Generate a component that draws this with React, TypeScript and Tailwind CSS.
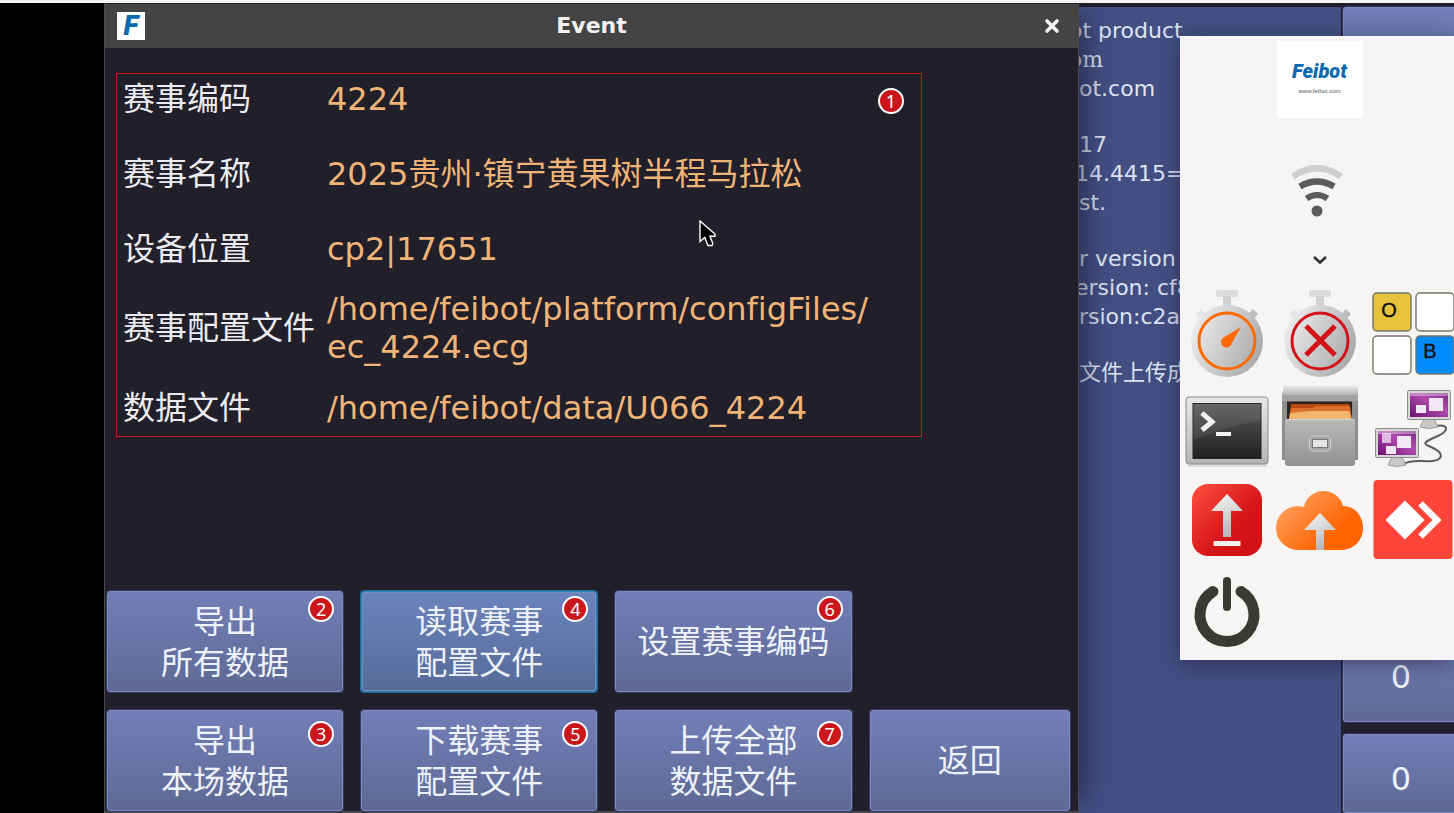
import type { ReactNode } from 'react'
import clsx from 'clsx'

interface EventField {
  label: string
  value: string
  tall?: boolean
}

interface EventAction {
  lines: string[]
  step?: number
  active?: boolean
}

const fields: EventField[] = [
  { label: '赛事编码', value: '4224' },
  { label: '赛事名称', value: '2025贵州·镇宁黄果树半程马拉松' },
  { label: '设备位置', value: 'cp2|17651' },
  { label: '赛事配置文件', value: '/home/feibot/platform/configFiles/\nec_4224.ecg', tall: true },
  { label: '数据文件', value: '/home/feibot/data/U066_4224' },
]

const topActions: EventAction[] = [
  { lines: ['导出', '所有数据'], step: 2 },
  { lines: ['读取赛事', '配置文件'], step: 4, active: true },
  { lines: ['设置赛事编码'], step: 6 },
]

const bottomActions: EventAction[] = [
  { lines: ['导出', '本场数据'], step: 3 },
  { lines: ['下载赛事', '配置文件'], step: 5 },
  { lines: ['上传全部', '数据文件'], step: 7 },
  { lines: ['返回'] },
]

function StepBadge({ step, className }: { step: number; className: string }) {
  return (
    <span
      className={clsx(
        "absolute flex size-[26px] items-center justify-center rounded-full border-2 border-white bg-[#cb171b] font-['Noto_Sans'] text-lg leading-none text-white",
        className,
      )}
    >
      {step}
    </span>
  )
}

function ActionButton({ action, badgeClass }: { action: EventAction; badgeClass: string }) {
  return (
    <button
      type="button"
      className={clsx(
        'relative flex flex-col items-center justify-center rounded-[3px] border pt-0.5 text-[32px] leading-[41px] text-[#f0f2fa]',
        action.active
          ? 'border-[#2f80b0] bg-linear-to-b from-[#6c84bd] to-[#566b98] shadow-[inset_0_0_0_1px_#6f8fbf,0_0_0_1px_#266a94]'
          : 'border-[#7f8abf] bg-linear-to-b from-[#727fb8] to-[#5e6994] shadow-[0_0_0_1px_#323b62]',
      )}
    >
      {action.lines.map((line) => (
        <span key={line}>{line}</span>
      ))}
      {action.step && <StepBadge step={action.step} className={badgeClass} />}
    </button>
  )
}

function EventWindow() {
  return (
    <section className="relative z-10 flex min-w-0 flex-1 flex-col border-x border-b-2 border-[#4a4a4a] bg-[#211f29] shadow-[20px_0_24px_-14px_rgba(20,20,45,0.6)]">
      <header className="mt-px grid h-11 grid-cols-[28px_1fr_28px] items-center bg-[#444444] px-3">
        <span className="flex size-7 items-center justify-center bg-white font-['Roboto'] text-[28px] leading-none font-black text-[#0a68b0] italic">
          F
        </span>
        <h1 className="text-center text-[22px] leading-7 font-bold text-[#f2f2f2]">Event</h1>
        <button type="button" aria-label="关闭" className="flex size-7 items-center justify-center">
          <svg viewBox="0 0 16 16" className="size-4">
            <path d="M3 3 13 13M13 3 3 13" stroke="#f4f4f4" strokeWidth="3.6" strokeLinecap="round" />
          </svg>
        </button>
      </header>

      <div className="relative mt-[13px] mr-[156px] ml-[11px]">
        <dl className="pl-[7px] text-[32px] leading-[38px] [font-variant-ligatures:none]">
          {fields.map((field) => (
            <div
              key={field.label}
              className={clsx(
                'grid grid-cols-[204px_1fr] items-center',
                field.tall ? 'min-h-[84px]' : 'min-h-[75px]',
              )}
            >
              <dt className="whitespace-nowrap text-[#ececf0]">{field.label}</dt>
              <dd className="whitespace-pre-line text-[#f0b478]">{field.value}</dd>
            </div>
          ))}
        </dl>
        <div className="pointer-events-none absolute inset-x-0 top-3 bottom-2 border border-[#c8171d]" />
        <StepBadge step={1} className="top-[27px] right-[18px]" />
        {/* マウスカーソル */}
        <svg viewBox="0 0 17 27" className="absolute top-[159px] left-[583px] h-[27px] w-[17px]">
          <path
            d="M1 1V21.5L5.8 17.5 9 25.5H13L13.8 23.5 11 16.2H16V14Z"
            fill="#000"
            stroke="#fff"
            strokeWidth="1.4"
          />
        </svg>
      </div>

      <div className="mt-auto grid auto-rows-[101px] grid-cols-[237fr_237fr_237fr_201fr] gap-[18px] pr-2 pl-0.5">
        {topActions.map((action) => (
          <ActionButton key={action.step} action={action} badgeClass="top-1 right-2" />
        ))}
        <span />
        {bottomActions.map((action) => (
          <ActionButton key={action.lines.join('')} action={action} badgeClass="top-2.5 right-2" />
        ))}
      </div>
    </section>
  )
}

function KeypadKey({ children, className }: { children?: ReactNode; className: string }) {
  return (
    <button
      type="button"
      className={clsx(
        'flex w-full items-center justify-center rounded-l-[3px] border border-r-0 border-[#7f8abf] bg-linear-to-b from-[#727fb8] to-[#5e6994] pl-1 text-[32px] leading-9 text-[#f0f2fa] shadow-[0_0_0_1px_#2c3358]',
        className,
      )}
    >
      {children}
    </button>
  )
}

function MainConsole() {
  return (
    <div className="flex w-[375px] shrink-0 gap-0.5 overflow-hidden bg-[#211f29] pt-1">
      <div className="flex flex-1 flex-col gap-[27px] overflow-hidden bg-[#434f83] pt-[9px] text-[22px] leading-[29px] whitespace-nowrap text-[#dfe3f2]">
        <div>
          <p className="-ml-2.5">ot product</p>
          <p className="-ml-2.5 font-['DejaVu_Serif',serif]">om</p>
          <p>ot.com</p>
        </div>
        <div>
          <p>17</p>
          <p className="-ml-1">14.4415=</p>
          <p>st.</p>
        </div>
        <div>
          <p>r version</p>
          <p className="-ml-1">ersion: cf8</p>
          <p>rsion:c2a</p>
        </div>
        <p>文件上传成</p>
      </div>
      <div className="flex w-[111px] flex-col gap-3">
        <KeypadKey className="h-[90px]" />
        <KeypadKey className="flex-1" />
        <KeypadKey className="h-[90px]">0</KeypadKey>
        <KeypadKey className="h-[79px] pt-2.5">0</KeypadKey>
      </div>
    </div>
  )
}

function StopwatchBody() {
  return (
    <g fill="url(#steel)">
      <rect x="36" y="3" width="22" height="7" rx="2" fill="#dcdcdc" />
      <rect x="43" y="9" width="8" height="12" fill="#d2d2d2" />
      <path d="M67 28 73 22 78 27 72 34Z" fill="#bdbdbd" />
      <path d="M27 28 21 22 16 27 22 34Z" fill="#e6e6e6" />
      <circle cx="47" cy="54" r="36" />
    </g>
  )
}

function Monitor({ x, y }: { x: number; y: number }) {
  return (
    <g transform={`translate(${x} ${y})`}>
      <path d="M17 29H27L31 37Q22 40 13 37Z" fill="#c9c9c7" stroke="#8c8c8a" strokeWidth="0.8" />
      <rect x="0.5" y="0.5" width="43" height="29" rx="1" fill="#d8d8d6" stroke="#8c8c8a" />
      <rect x="3" y="3" width="38" height="24" fill="url(#violet)" />
      <path d="M3 3H41V6H3Z" fill="#fff" opacity="0.35" />
    </g>
  )
}

const launchers: { name: string; icon: ReactNode }[] = [
  {
    name: '计时',
    icon: (
      <>
        <StopwatchBody />
        <circle cx="47" cy="54" r="28" fill="none" stroke="#ff6a00" strokeWidth="3" />
        <path d="M61 40 52 56A5.500 5.500 0 1 1 43.500 50.500Z" fill="#ff6a00" />
      </>
    ),
  },
  {
    name: '停止计时',
    icon: (
      <>
        <StopwatchBody />
        <circle cx="47" cy="54" r="28" fill="none" stroke="#d4121a" strokeWidth="3" />
        <path d="M33 39 62 68M62 39 33 68" stroke="#d4121a" strokeWidth="5" />
      </>
    ),
  },
  {
    name: 'OB',
    icon: (
      <>
        <g stroke="#77746c" strokeWidth="1.4">
          <rect x="7" y="6" width="38" height="38" rx="4" fill="#e7c23c" />
          <rect x="50" y="6" width="38" height="38" rx="4" fill="#fff" />
          <rect x="7" y="49" width="38" height="38" rx="4" fill="#fff" />
          <rect x="50" y="49" width="38" height="38" rx="4" fill="#008cff" />
        </g>
        <g fontFamily="Liberation Sans, sans-serif" fontSize="20" textAnchor="middle" fill="#111" stroke="#111" strokeWidth="0.4">
          <text x="23" y="30">O</text>
          <text x="64" y="71">B</text>
        </g>
      </>
    ),
  },
  {
    name: '终端',
    icon: (
      <>
        <rect x="7" y="82" width="80" height="5" rx="2" fill="#000" opacity="0.1" />
        <rect x="6" y="17" width="82" height="67" rx="3" fill="url(#frame)" stroke="#8b8b89" />
        <rect x="13" y="23.500" width="68" height="55" fill="url(#screen)" stroke="#222" />
        <path d="M13 23.500H81V40Q50 46 13 60Z" fill="#fff" opacity="0.08" />
        <path d="M22 33 32 42 22 50" fill="none" stroke="#f4f4f4" strokeWidth="5" />
        <path d="M36 54H51" stroke="#f4f4f4" strokeWidth="4" />
      </>
    ),
  },
  {
    name: '文件管理',
    icon: (
      <>
        <path d="M12 6H84L85 15V80H9V15Z" fill="#8e8e8c" />
        <path d="M12 6H84L85 15H9Z" fill="url(#frame)" />
        <rect x="9" y="15" width="76" height="6" fill="#a4a4a2" />
        <rect x="14" y="21.500" width="65" height="20" fill="#2d2420" />
        <path d="M18 24H76L79 40H16Z" fill="#b8480f" />
        <path d="M18 28H40L43 26H77L79 40H16Z" fill="#db702a" />
        <path d="M17 33 38 31H76L79 40H16Z" fill="#f2b670" />
        <path d="M13 39H80Q82 39 82 41V83Q82 86 79 86H15Q12 86 12 83V41Z" fill="url(#drawer)" />
        <path d="M13 39.500H81" stroke="#d4d4d2" />
        <rect x="36.500" y="56" width="21" height="15" rx="4" fill="#a5a5a3" stroke="#d0d0ce" />
        <rect x="39.500" y="59.500" width="15" height="8" fill="#e4e4e4" stroke="#777" />
      </>
    ),
  },
  {
    name: '网络',
    icon: (
      <>
        <path
          d="M70 46C82 44 83 50 74 55C58 62 55 63 65 67C79 73 77 80 66 81C55 82 46 79 38 84"
          fill="none"
          stroke="#5d5d5b"
          strokeWidth="2"
        />
        <Monitor x={41} y={10} />
        <Monitor x={9} y={48} />
        <g fill="#f1e6f2">
          <rect x="63" y="18" width="14" height="13" />
          <rect x="50" y="25" width="10" height="8" />
          <rect x="31" y="56" width="14" height="12" />
          <rect x="16" y="53" width="9" height="10" opacity="0.75" />
          <rect x="20" y="66" width="10" height="8" />
        </g>
      </>
    ),
  },
  {
    name: '上传',
    icon: (
      <>
        <rect x="12" y="11" width="70" height="72" rx="16" fill="url(#red)" />
        <path d="M47 21 63 38H51V64H43V38H31Z" fill="url(#arrow)" />
        <rect x="33.500" y="68" width="27" height="5" rx="1" fill="#efefef" />
      </>
    ),
  },
  {
    name: '云上传',
    icon: (
      <>
        <path
          d="M25 77A22 22 0 0 1 25 33L31 34A20 20 0 0 1 70 33C82 33 90 43 90 55C90 68 80 77 68 77Z"
          fill="url(#orange)"
        />
        <path d="M47 40 63 57H51V77H43V57H31Z" fill="url(#arrow)" />
      </>
    ),
  },
  {
    name: 'AnyDesk',
    icon: (
      <>
        <rect x="7.500" y="7" width="79" height="79" rx="4" fill="#ff443a" />
        <path d="M39 27.500 58.500 47 39 66.500 19.500 47Z" fill="#fff" />
        <path d="M54.500 30.500 71 47 54.500 63.500" fill="none" stroke="#fff" strokeWidth="6.500" />
      </>
    ),
  },
  {
    name: '关机',
    icon: (
      <g fill="none" stroke="#3a3934" strokeLinecap="round">
        <path d="M33 25.500A27 27 0 1 0 61 25.500" strokeWidth="11" />
        <path d="M47 15V41" strokeWidth="8" />
      </g>
    ),
  },
]

function IconGradients() {
  return (
    <svg aria-hidden="true" className="absolute size-0">
      <defs>
        <linearGradient id="steel" gradientUnits="userSpaceOnUse" x1="15" y1="35" x2="83" y2="65">
          <stop offset="0" stopColor="#ebebeb" />
          <stop offset="1" stopColor="#a9a9a9" />
        </linearGradient>
        <linearGradient id="frame" x1="0" y1="0" x2="0" y2="1">
          <stop offset="0" stopColor="#e8e8e6" />
          <stop offset="1" stopColor="#b4b4b2" />
        </linearGradient>
        <linearGradient id="screen" x1="0" y1="0" x2="0" y2="1">
          <stop offset="0" stopColor="#5a5a5a" />
          <stop offset="1" stopColor="#202020" />
        </linearGradient>
        <linearGradient id="drawer" x1="0" y1="0" x2="0" y2="1">
          <stop offset="0" stopColor="#b9b9b7" />
          <stop offset="1" stopColor="#929290" />
        </linearGradient>
        <linearGradient id="violet" x1="0" y1="1" x2="1" y2="0">
          <stop offset="0" stopColor="#6a1170" />
          <stop offset="0.6" stopColor="#b14bb0" />
          <stop offset="1" stopColor="#7a2a86" />
        </linearGradient>
        <linearGradient id="red" x1="0" y1="0" x2="1" y2="1">
          <stop offset="0" stopColor="#ff5040" />
          <stop offset="0.6" stopColor="#d41519" />
          <stop offset="1" stopColor="#d01015" />
        </linearGradient>
        <linearGradient id="orange" x1="0" y1="0.2" x2="0.7" y2="0.7">
          <stop offset="0" stopColor="#ffa264" />
          <stop offset="1" stopColor="#ff6400" />
        </linearGradient>
        <linearGradient id="arrow" x1="0" y1="0" x2="0.4" y2="1">
          <stop offset="0" stopColor="#fafafa" />
          <stop offset="1" stopColor="#b8b8b8" />
        </linearGradient>
      </defs>
    </svg>
  )
}

function Dock() {
  return (
    <aside className="absolute top-[36px] right-0 z-20 w-[274px] overflow-hidden border-t border-white bg-[#f6f5f3] shadow-[0_4px_20px_rgba(20,20,50,0.5)]">
      <IconGradients />
      <div className="flex w-[279px] flex-col items-center pt-1 pb-px">
        <div className="flex h-[77px] w-[86px] flex-col items-center bg-white pt-[18px]">
          <span className="font-['Roboto'] text-xl leading-6 font-black text-[#0a68b0] italic">
            Feibot
          </span>
          <span className="font-['Liberation_Sans'] text-[6px] leading-4 text-[#555]">
            www.feibot.com
          </span>
        </div>
        <svg viewBox="0 0 52 52" className="mt-[47px] mr-1.5 size-[52px]" fill="none">
          <path d="M2 11.500Q26 -5 50 11.500" stroke="#cfcfcf" strokeWidth="6.500" />
          <path d="M9 21.500Q26 11.500 43 21.500" stroke="#5b5b5b" strokeWidth="6.500" />
          <path d="M15.500 33.500Q26 26.500 36.500 33.500" stroke="#5b5b5b" strokeWidth="6" />
          <circle cx="26" cy="46" r="5.500" fill="#5b5b5b" />
        </svg>
        <button type="button" aria-label="展开" className="mt-[35px] mb-[19px]">
          <svg viewBox="0 0 16 16" className="size-4">
            <path d="M2 5 8 10.500 14 5" fill="none" stroke="#2b3236" strokeWidth="2.6" />
          </svg>
        </button>
        <div className="grid grid-cols-3">
          {launchers.map((item) => (
            <button key={item.name} type="button" aria-label={item.name} className="size-[93px]">
              <svg viewBox="0 0 93 93" className="size-full">
                {item.icon}
              </svg>
            </button>
          ))}
        </div>
      </div>
    </aside>
  )
}

export default function App() {
  return (
    <div className="flex min-h-screen flex-col bg-black font-['DejaVu_Sans','Noto_Sans_CJK_SC',sans-serif]">
      <div className="relative z-20 h-[3px] bg-[#f4f4f6]" />
      <main className="flex flex-1 pl-[104px]">
        <EventWindow />
        <MainConsole />
      </main>
      <Dock />
    </div>
  )
}
